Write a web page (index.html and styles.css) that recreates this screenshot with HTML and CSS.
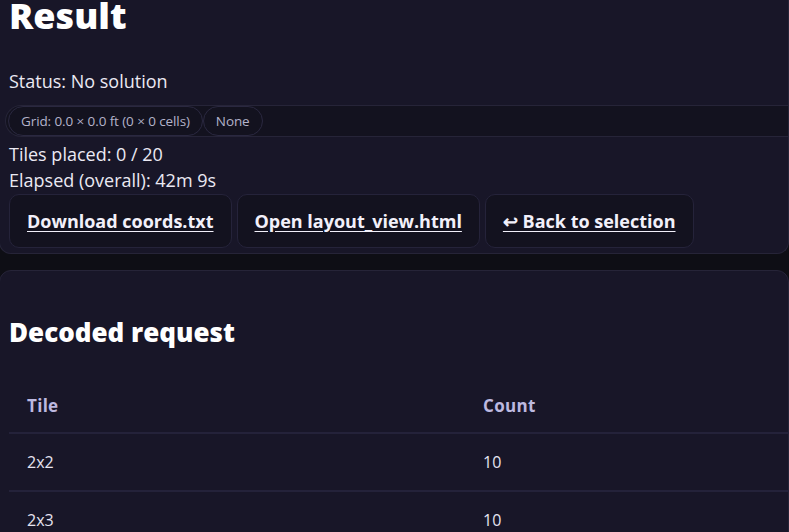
FILE: index.html
```html
<!DOCTYPE html>
<html>
<head>
<meta charset="utf-8">
<link rel="stylesheet" href="styles.css">
</head>
<body>
<section class="card card-result">
  <h1 class="title">Result</h1>
  <p class="line status">Status: No solution</p>
  <div class="pill-row">
    <span class="pill">Grid: 0.0 × 0.0 ft (0 × 0 cells)</span>
    <span class="pill">None</span>
  </div>
  <p class="line">Tiles placed: 0 / 20</p>
  <p class="line">Elapsed (overall): 42m 9s</p>
  <div class="actions">
    <a class="btn" href="#">Download coords.txt</a>
    <a class="btn" href="#">Open layout_view.html</a>
    <a class="btn" href="#">↩ Back to selection</a>
  </div>
</section>
<section class="card card-request">
  <h2 class="subtitle">Decoded request</h2>
  <table class="tbl">
    <thead>
      <tr><th>Tile</th><th>Count</th></tr>
    </thead>
    <tbody>
      <tr><td>2x2</td><td>10</td></tr>
      <tr><td>2x3</td><td>10</td></tr>
    </tbody>
  </table>
</section>
</body>
</html>
```
FILE: styles.css
```css
html, body {
  margin: 0;
  padding: 0;
}
body {
  background: #0e0e15;
  color: #ebe9f3;
  font-family: "Open Sans", "Noto Sans", sans-serif;
  width: 789px;
  height: 532px;
  overflow: hidden;
}
.card {
  background: #181628;
  border: 1px solid #262438;
  border-radius: 12px;
  box-sizing: border-box;
  width: 790px;
  margin-left: -1px;
  padding: 0 0 0 9px;
}
.card-result {
  border-top: none;
  border-top-left-radius: 0;
  border-top-right-radius: 0;
  padding-bottom: 5px;
}
.title {
  margin: -4px 0 0 0;
  font-size: 36px;
  line-height: 40px;
  font-weight: 800;
  color: #ffffff;
}
.line {
  margin: 0;
  font-size: 18px;
  line-height: 26px;
}
.status {
  margin-top: 32px;
}
.pill-row {
  margin: 11px 0 4px -4px;
  height: 32px;
  box-sizing: border-box;
  border: 1px solid #262438;
  border-right: none;
  border-radius: 16px 0 0 16px;
  background: #13121f;
  display: flex;
  align-items: center;
  padding-left: 2px;
}
.pill {
  height: 30px;
  box-sizing: border-box;
  border: 1px solid #2a2840;
  border-radius: 15px;
  display: flex;
  align-items: center;
  padding: 0 12px;
  font-size: 13.5px;
  color: #b4b2ca;
  letter-spacing: -0.1px;
}
.actions {
  display: flex;
  gap: 5px;
  margin-top: 1px;
}
.btn {
  height: 54px;
  box-sizing: border-box;
  display: flex;
  align-items: center;
  padding: 0 17px;
  border: 1px solid #25233a;
  border-radius: 10px;
  background: #13121f;
  color: #f2f0fa;
  font-weight: 700;
  font-size: 18px;
  text-decoration: underline;
  text-underline-offset: 3px;
}
.card-request {
  margin-top: 16px;
  height: 300px;
  padding-left: 9px;
}
.subtitle {
  margin: 41px 0 0 0;
  font-size: 26px;
  line-height: 40px;
  font-weight: 800;
  color: #ffffff;
}
.tbl {
  margin-top: 26px;
  width: 912px;
  border-collapse: collapse;
  table-layout: fixed;
}
.tbl th, .tbl td {
  text-align: left;
  padding: 0 18px;
}
.tbl th {
  height: 54px;
  font-size: 17px;
  font-weight: 700;
  color: #bdb9e0;
  letter-spacing: 0.3px;
  border-bottom: 2px solid #24223a;
}
.tbl td {
  height: 56px;
  font-size: 16px;
  color: #e6e4f0;
  border-bottom: 2px solid #24223a;
}
```
